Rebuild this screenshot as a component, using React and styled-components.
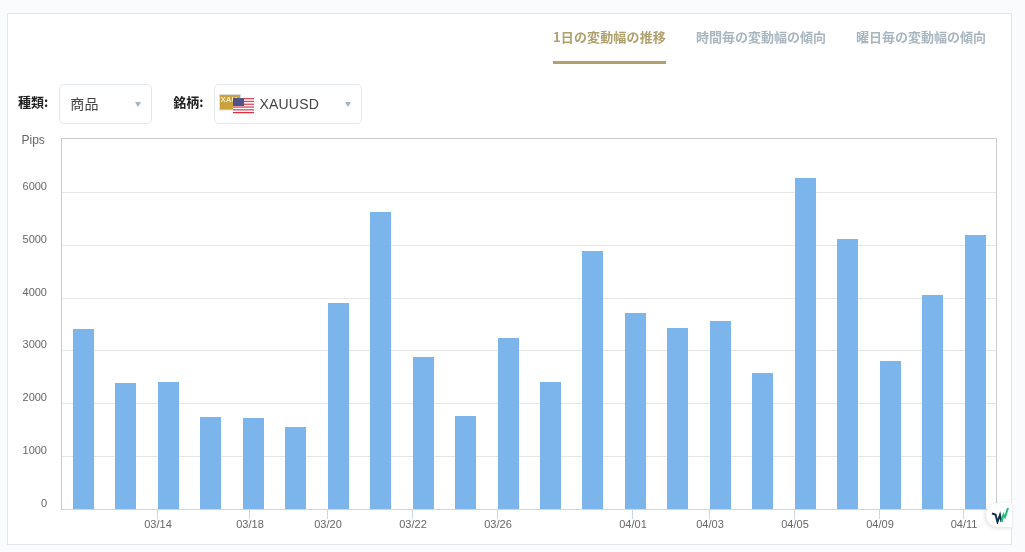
import React from "react";
import styled, { createGlobalStyle } from "styled-components";

const Global = createGlobalStyle`
  html, body { margin: 0; padding: 0; background: #f9fbfd; }
  body { font-family: "Liberation Sans", "Noto Sans CJK JP", sans-serif; }
  #root { width: 1025px; height: 552px; overflow: hidden; }
`;

const Page = styled.div`
  position: relative;
  box-sizing: border-box;
  width: 1025px;
  height: 552px;
  padding: 13px 13px 7px 7px;
`;
const Card = styled.div`
  box-sizing: border-box;
  height: 532px;
  background: #fff;
  border: 1px solid #e1e7eb;
`;
const Tabs = styled.div`
  display: flex;
  justify-content: flex-end;
  gap: 30px;
  height: 50px;
  padding-right: 25px;
  will-change: transform;
`;
const Tab = styled.div`
  box-sizing: border-box;
  height: 50px;
  padding-top: 14px;
  font-family: "Noto Sans CJK JP", sans-serif;
  font-size: 13px;
  line-height: 18px;
  font-weight: 700;
  letter-spacing: ${(p) => (p.$active ? "0.15px" : "0")};
  color: ${(p) => (p.$active ? "#b0a06d" : "#a9b6bf")};
  border-bottom: ${(p) => (p.$active ? "3px solid #b0a06d" : "none")};
`;
const Filters = styled.div`
  display: flex;
  align-items: center;
  height: 40px;
  margin-top: 20px;
  padding-left: 10px;
  will-change: transform;
`;
const Label = styled.div`
  font-family: "Noto Sans CJK JP", sans-serif;
  font-size: 13px;
  font-weight: 700;
  color: #222;
  margin-right: 11px;
  margin-top: -5px;
`;
const Select = styled.div`
  box-sizing: border-box;
  display: flex;
  align-items: center;
  width: ${(p) => p.$w}px;
  height: 40px;
  margin-right: 21px;
  padding: 0 10px 0 ${(p) => p.$pl}px;
  border: 1px solid #e1e7eb;
  border-radius: 5px;
  font-family: "Liberation Sans", "Noto Sans CJK JP", sans-serif;
  font-size: 14px;
  color: #444;
`;
const Value = styled.span`
  flex: 1;
  letter-spacing: 0.2px;
  margin-top: ${(p) => (p.$cjk ? "-2px" : "0")};
`;
const Caret = styled.span`
  width: 0;
  height: 0;
  border-left: 3.5px solid transparent;
  border-right: 3.5px solid transparent;
  border-top: 5px solid #a4b3c1;
`;
const Flags = styled.svg`
  width: 36px;
  height: 20px;
  margin-right: 4px;
  margin-top: -1px;
  flex: none;
`;
const Chart = styled.svg`
  display: block;
  width: 1003px;
  height: 419px;
  will-change: transform;
`;
const AxisText = styled.text`
  font-family: "Liberation Sans", sans-serif;
  font-size: 11px;
  fill: #666;
`;
const AxisTitle = styled(AxisText)`
  font-size: 12px;
`;
const Badge = styled.div`
  position: absolute;
  right: 13px;
  top: 503px;
  width: 26px;
  height: 24px;
  background: #fff;
  border-radius: 12px 0 0 12px;
  box-shadow: -1px 1px 4px rgba(0,0,0,.14);
  display: flex;
  align-items: center;
  justify-content: flex-end;
  padding-right: 3px;
  box-sizing: border-box;
`;

const tops = [329,383,382,417,418,427,303,212,357,416,338,382,251,313,328,321,373,178,239,361,295,235];
const lefts = [73,115,158,200,243,285,328,370,413,455,498,540,582,625,667,710,752,795,837,880,922,965];
const grid = [[192,6000],[245,5000],[298,4000],[350,3000],[403,2000],[456,1000]];
const ticks = [[157,"03/14"],[249,"03/18"],[327,"03/20"],[412,"03/22"],[497,"03/26"],[632,"04/01"],[709,"04/03"],[794,"04/05"],[879,"04/09"],[963,"04/11"]];

export default function App() {
  return (
    <Page>
      <Global />
      <Card>
        <Tabs>
          <Tab $active>1日の変動幅の推移</Tab>
          <Tab>時間毎の変動幅の傾向</Tab>
          <Tab>曜日毎の変動幅の傾向</Tab>
        </Tabs>
        <Filters>
          <Label>種類:</Label>
          <Select $w={93} $pl={10}><Value $cjk>商品</Value><Caret /></Select>
          <Label>銘柄:</Label>
          <Select $w={148} $pl={4}>
            <Flags viewBox="0 0 36 20">
              <rect x="0.5" y="0.5" width="21" height="15.5" fill="#c9a23e" stroke="#ddd" />
              <text x="1.5" y="7.5" fontSize="8" fontWeight="700" fill="#f6e9c0" fontFamily="Liberation Sans">XAU</text>
              <rect x="14" y="4" width="21" height="15" fill="#fff" />
              {[0,1,2,3,4,5].map((i) => <rect key={i} x="14" y={4 + i * 2.8} width="21" height="1.3" fill="#e0485a" />)}
              <rect x="14" y="18" width="21" height="1" fill="#d8323f" />
              <rect x="14" y="4" width="11" height="8" fill="#4f5488" />
            </Flags>
            <Value>XAUUSD</Value>
            <Caret />
          </Select>
        </Filters>
        <Chart viewBox="8 124 1003 419">
          <rect x="61.5" y="138.5" width="935" height="371" fill="#fff" stroke="#ccc" />
          {grid.map(([y]) => <line key={y} x1="62" x2="996" y1={y + 0.5} y2={y + 0.5} stroke="#e6e6e6" />)}
          {lefts.map((x, i) => <rect key={x} x={x} y={tops[i]} width="21" height={509 - tops[i]} fill="#7cb5ec" />)}
          <line x1="61" x2="997" y1="509.5" y2="509.5" stroke="#ccd6eb" />
          {ticks.map(([x]) => <line key={x} x1={x + 0.5} x2={x + 0.5} y1="510" y2="519" stroke="#ccd6eb" />)}
          {grid.map(([y, v]) => <AxisText key={v} x="47" y={y - 2} textAnchor="end">{v}</AxisText>)}
          <AxisText x="47" y="507" textAnchor="end">0</AxisText>
          <AxisTitle x="21.5" y="144">Pips</AxisTitle>
          {ticks.map(([x, t]) => <AxisText key={t} x={x + 1} y="528" textAnchor="middle">{t}</AxisText>)}
        </Chart>
      </Card>
      <Badge>
        <svg width="18" height="17" viewBox="0 0 18 17">
          <path d="M1 6.5 L4.5 7.5 L6.5 15 L9 8 L10.5 15" fill="none" stroke="#12304f" strokeWidth="2" />
          <path d="M10.5 15 L12.5 7.5 L14 10 L17 1" fill="none" stroke="#1fbf75" strokeWidth="2" />
        </svg>
      </Badge>
    </Page>
  );
}
